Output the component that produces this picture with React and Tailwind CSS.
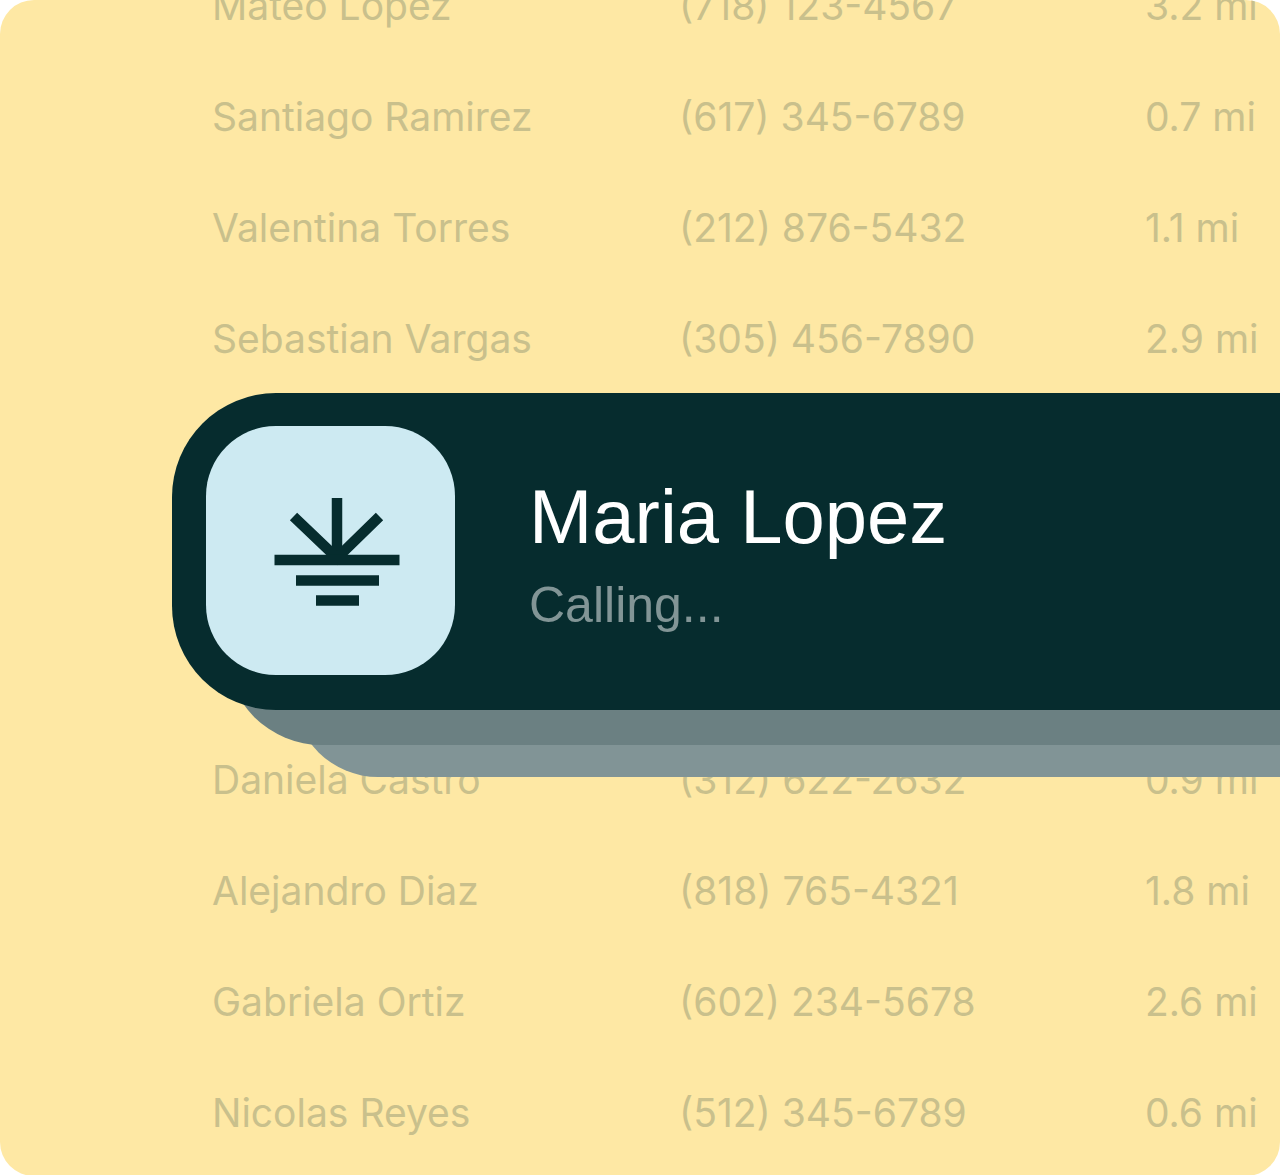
const nearby = [
  { name: 'Mateo Lopez', phone: '(718) 123-4567', distance: '3.2 mi' },
  { name: 'Santiago Ramirez', phone: '(617) 345-6789', distance: '0.7 mi' },
  { name: 'Valentina Torres', phone: '(212) 876-5432', distance: '1.1 mi' },
  { name: 'Sebastian Vargas', phone: '(305) 456-7890', distance: '2.9 mi' },
];

const upcoming = [
  { name: 'Daniela Castro', phone: '(312) 622-2632', distance: '0.9 mi' },
  { name: 'Alejandro Diaz', phone: '(818) 765-4321', distance: '1.8 mi' },
  { name: 'Gabriela Ortiz', phone: '(602) 234-5678', distance: '2.6 mi' },
  { name: 'Nicolas Reyes', phone: '(512) 345-6789', distance: '0.6 mi' },
];

function ContactTable({ contacts, label }) {
  return (
    <table
      aria-label={label}
      className="w-full table-fixed whitespace-nowrap text-left text-[39px] leading-none text-[#c9c08c]"
    >
      <colgroup>
        <col className="w-[467px]" />
        <col className="w-[466px]" />
        <col />
      </colgroup>
      <tbody>
        {contacts.map((contact) => (
          <tr key={contact.phone} className="h-[111px]">
            <th scope="row" className="p-0 font-normal">
              {contact.name}
            </th>
            <td className="p-0">{contact.phone}</td>
            <td className="p-0">{contact.distance}</td>
          </tr>
        ))}
      </tbody>
    </table>
  );
}

function SunriseIcon() {
  return (
    <svg
      viewBox="0 0 126 108"
      className="w-[126px]"
      fill="none"
      stroke="#062c2e"
      strokeWidth="10.5"
      aria-hidden="true"
    >
      <path d="M63 0V60" />
      <path d="M19.500 18.500L63 60L105.500 18.500" />
      <path d="M0.500 62H125.500" />
      <path d="M22 82.500H105" />
      <path d="M42 102.500H85" />
    </svg>
  );
}

function CallCard({ name, status }) {
  return (
    <div className="grid pl-[172px]">
      {/* Queued calls stacked behind the active one */}
      <div className="col-start-1 row-start-1 ml-[122px] mt-[67px] rounded-bl-[84px] bg-[#819496]" />
      <div className="col-start-1 row-start-1 mb-8 ml-[54px] mt-[67px] rounded-bl-[96px] bg-[#6b8082]" />
      <div className="col-start-1 row-start-1 mb-[67px] flex items-center rounded-l-[104px] bg-[#062c2e] pb-[35px] pl-[34px] pt-[33px]">
        <div className="flex size-[249px] shrink-0 items-center justify-center rounded-[70px] bg-[#cdeaf2] pl-3 pt-[3px]">
          <SunriseIcon />
        </div>
        <div className="ml-[74px] whitespace-nowrap pt-5 font-['Liberation_Sans',Arial,sans-serif]">
          <h1 className="text-[76px] leading-[88px] text-white">{name}</h1>
          <p className="text-[50px] leading-[88px] text-[#829596]">{status}</p>
        </div>
      </div>
    </div>
  );
}

export default function App() {
  return (
    <main className="overflow-hidden rounded-[34px] bg-[#fee8a4] pb-2 font-[Inter,sans-serif]">
      <div className="-mt-[50px] pl-[212px]">
        <ContactTable contacts={nearby} label="Nearby contacts" />
      </div>
      <div className="relative z-10 -mt-px">
        <CallCard name="Maria Lopez" status="Calling..." />
      </div>
      <div className="-mt-[53px] pl-[212px]">
        <ContactTable contacts={upcoming} label="Upcoming contacts" />
      </div>
    </main>
  );
}
